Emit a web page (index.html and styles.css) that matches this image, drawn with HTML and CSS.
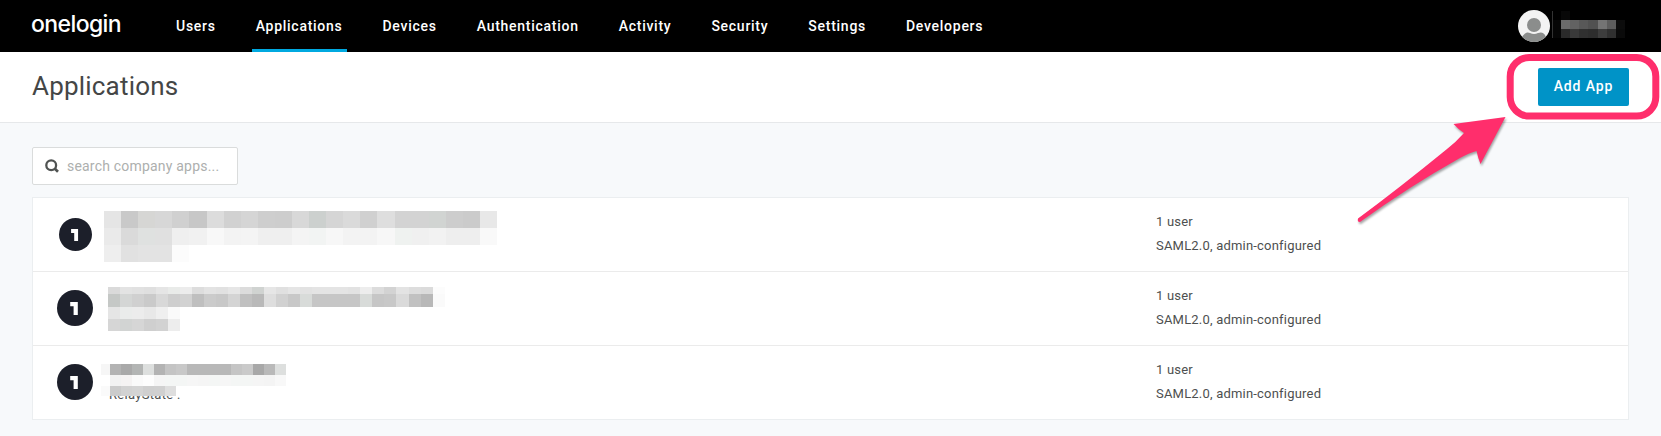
FILE: index.html
```html
<!DOCTYPE html>
<html lang="en">
<head>
<meta charset="utf-8">
<title>Applications</title>
<link rel="stylesheet" href="styles.css">
</head>
<body>
<header class="topbar">
  <div class="logo">onelogin</div>
  <nav class="nav">
    <a>Users</a><a class="active">Applications</a><a>Devices</a><a>Authentication</a><a>Activity</a><a>Security</a><a>Settings</a><a>Developers</a>
  </nav>
  <div class="account">
    <svg class="avatar" width="32" height="32" viewBox="0 0 32 32"><defs><clipPath id="face"><circle cx="16" cy="16" r="16"/></clipPath></defs><g clip-path="url(#face)"><rect width="32" height="32" fill="#f3f3f3"/><circle cx="16" cy="15" r="7" fill="#8b8d8c"/><path d="M4 27C7 22 10 22 12 23Q16 25 20 23C23 22 26 22 28 27V32H4Z" fill="#8b8d8c"/></g></svg>
    <svg class="mosaic" data-mosaic="name" width="73" height="28"></svg>
  </div>
</header>
<section class="titlebar">
  <h1>Applications</h1>
  <button class="add">Add App</button>
</section>
<main class="content">
  <div class="search">
    <svg width="14" height="14" viewBox="0 0 14 14" fill="none" stroke="#505352"><circle cx="6.2" cy="6.2" r="4.9" stroke-width="2.3"/><path d="M9.6 9.6L13 12.8" stroke-width="2.7"/></svg>
    <input type="text" placeholder="search company apps...">
  </div>
  <div class="apps">
    <div class="row">
      <div class="mark"><svg width="33" height="33" viewBox="0 0 36 36"><circle cx="18" cy="18" r="18" fill="#1c1f2a"/><path d="M13.2 14.2H18.7V25" fill="none" stroke="#fff" stroke-width="4.2"/></svg></div>
      <div class="name first"><svg class="mosaic" data-mosaic="one" width="395" height="52"></svg></div>
      <div class="meta"><span>1 user</span><span>SAML2.0, admin-configured</span></div>
    </div>
    <div class="row">
      <div class="mark"><svg width="36" height="36" viewBox="0 0 36 36"><circle cx="18" cy="18" r="18" fill="#1c1f2a"/><path d="M13.2 14.2H18.7V25" fill="none" stroke="#fff" stroke-width="4.2"/></svg></div>
      <div class="name second"><svg class="mosaic" data-mosaic="two" width="338" height="45"></svg></div>
      <div class="meta"><span>1 user</span><span>SAML2.0, admin-configured</span></div>
    </div>
    <div class="row">
      <div class="mark"><svg width="36" height="36" viewBox="0 0 36 36"><circle cx="18" cy="18" r="18" fill="#1c1f2a"/><path d="M13.2 14.2H18.7V25" fill="none" stroke="#fff" stroke-width="4.2"/></svg></div>
      <div class="name third"><span class="relay">RelayState :</span><svg class="mosaic over" data-mosaic="three" width="188" height="34"></svg></div>
      <div class="meta"><span>1 user</span><span>SAML2.0, admin-configured</span></div>
    </div>
  </div>
</main>
<svg class="callout" width="1661" height="436" viewBox="0 0 1661 436">
  <rect x="1510.2" y="57.5" width="145.6" height="58.5" rx="19" fill="none" stroke="#ff2e6c" stroke-width="7"/>
  <path d="M1505.5 117L1453.5 124Q1458 129 1464 133Q1456 142 1447 149Q1398 189 1358 218.5Q1357 222 1360 222Q1410 186 1460 158Q1469 153 1476.5 151Q1478 158 1480.5 164Z" fill="#ff2e6c"/>
</svg>
<script src="mosaic.js"></script>
</body>
</html>
```
FILE: styles.css
```css
* { box-sizing: border-box; }
body { margin: 0; height: 436px; overflow: hidden; position: relative; background: #f7f9fb; font-family: Roboto, sans-serif; color: #4d4f4f; }
.topbar { height: 52px; background: #000; color: #fff; display: flex; padding: 0 36px 0 31px; }
.logo { width: 141px; font: 500 23px/49px Inter, sans-serif; letter-spacing: -0.6px; }
.nav { display: flex; gap: 32px; }
.nav a { height: 52px; padding: 0 4px; font-size: 14px; font-weight: 500; line-height: 52px; letter-spacing: 0.73px; }
.nav .active { border-bottom: 3px solid #00a9e0; }
.account { margin-left: auto; display: flex; padding-top: 10px; gap: 2px; }
.mosaic { display: block; }
.titlebar { height: 71px; background: #fff; border-bottom: 1px solid #e6e8ea; display: flex; align-items: flex-start; justify-content: space-between; padding: 16px 32px 0; }
h1 { margin: 0; font-size: 26px; font-weight: 400; line-height: 36px; letter-spacing: 0.2px; color: #444646; }
.add { width: 91px; height: 38px; border: 0; border-radius: 2px; background: #0093c7; color: #fff; font: 500 14px Roboto, sans-serif; letter-spacing: 0.9px; padding: 0 0 2px; }
.content { padding: 24px 32px 0; }
.search { width: 206px; height: 38px; border: 1px solid #dadcdc; border-radius: 2px; background: #fff; display: flex; align-items: center; padding: 0 12px; gap: 8px; }
.search svg { flex: none; }
.search input { width: 158px; border: 0; padding: 0; outline: 0; background: none; font: 400 14px Roboto, sans-serif; letter-spacing: 0.2px; }
.search input::placeholder { color: #adafae; }
.apps { margin-top: 12px; border: 1px solid #ebeef0; background: #fff; }
.row { height: 74px; border-bottom: 1px solid #ebebeb; display: flex; }
.row:last-child { height: 73px; border-bottom: 0; }
.mark { width: 84px; display: flex; align-items: center; justify-content: center; padding-bottom: 1px; }
.first { width: 1052px; margin-left: -13px; padding-top: 13px; }
.second { width: 1048px; margin-left: -9px; padding-top: 15px; }
.third { width: 1055px; margin-left: -16px; padding-top: 18px; display: grid; align-content: start; }
.relay { grid-area: 1 / 1; padding: 21px 0 0 8px; font-size: 13px; line-height: 19px; letter-spacing: 0.3px; }
.over { grid-area: 1 / 1; position: relative; }
.meta { display: flex; flex-direction: column; padding-top: 12px; font-size: 13px; line-height: 24px; letter-spacing: 0.2px; }
.callout { position: absolute; left: 0; top: 0; pointer-events: none; }
.callout path { filter: drop-shadow(1px 2px 1px rgba(0, 0, 0, 0.35)); }
```
FILE: mosaic.js
```js
// Redacted labels: each row is [x, y, cell width, row height, colours]
const mosaics = {
  name: [
    [0, 1, 1, 27, '333'], [9, 1, 9, 9, '080808'],
    [1, 10, 8, 18, '060606'],
    [9, 10, 9.15, 9, '6b6b6b 626262 585858 515151 747474 5d5d5d 0c0c0c'],
    [9, 19, 9.15, 9, '2a2a2a 393939 303030 2d2d2d 3d3d3d 303030 0a0a0a']
  ],
  one: [
    [0, 0, 17.09, 17, 'e5e5e5 c9c9c9 d6d6d4 d7d7d7 d0d0d0 c7c7c7 dcdcdc d1d1d1 d5d5d5 cecece cdcdcd d8d8d8 ccd0ce d5d5d5 dadada d0d0d0 dedede d3d3d3 d3d3d3 d1d4d2 cdcdcd cbcbcb e8e8e8'],
    [0, 17, 17.09, 17, 'eaeaea dadada dfe1e0 e0e0e0 efefef f1f1f1 f8f8f8 f3f3f3 f4f4f4 efefef efefef f4f4f4 f2f4f3 f7f7f7 f3f3f3 f3f3f3 f7f7f7 eff2f0 f0f0f0 f2f2f2 eeeeee eeeeee f9f9f9'],
    [0, 34, 17.09, 17, 'eeeeee e1e1e1 e3e3e3 e3e3e3 fcfcfc']
  ],
  two: [
    [0, 0, 12.02, 7, 'dadada e3e3e3 e1e1e1 dfdfdf e5e5e5 e9ebe9 ececec dddddd e3e3e3 e1e1e1 e6e6e6 dcdcdc d0d3d1 e6e6e6 e0e0e0 e5e5e5 e2e2e2 e4e4e4 e4e4e4 e4e4e4 e2e2e2 ededed dcdcdc d3d3d3 e3e3e3 dddddd dbdbdb fcfcfc'],
    [0, 7, 12.02, 13, 'c5c8c6 d4d6d5 d0d0d0 cacaca d8d8d8 cecece d2d2d2 bfbfbf cbcbcb c8c8c8 d4d4d4 c0c0c0 b9b9b9 dedede d1d1d1 c8c8c8 d8dbd9 c6c6c6 c6c6c6 c6c6c6 c6c6c6 d8dbd9 c6c6c6 c8c8c8 dadada c1c1c1 b8b8b8 fafafa'],
    [0, 20, 12.02, 12, 'e5e5e5 eaeceb ececec e8e8e8 efefef fafafa'],
    [0, 32, 12.02, 12, 'd6d6d6 d2d4d3 d6d6d6 cfcfcf d2d2d2 ededed']
  ],
  three: [
    [0, 0, 9, 11, 'f6f6f6'],
    [9, 0, 11, 11, 'b3b3b3 a9a9a9 b3b5b4 dddfde b3b3b3 c4c4c4 c8c8c8 b8b8b8 b8b8b8 b8b8b8 b8b8b8 c5c5c5 cacaca a8a8a8 b9b9b9 dddfde'],
    [9, 11, 11, 11, 'f2f2f2 f5f3f3 fafafa fdfdfd f5f5f5 f4f6f5 f4f6f5 f6f6f6 f5f5f5 f4f6f5 f6f6f6 f4f6f5 f4f6f5 f5f5f5 f4f4f4 f8f8f8'],
    [0, 22, 9, 10, 'fafafa'],
    [9, 22, 11, 10, 'cbcbcb d2d2d2 d4d4d4 cfcfcf d0d0d0 dedede'],
    [75, 22, 11, 8, 'ffffff']
  ]
};
document.querySelectorAll('[data-mosaic]').forEach(svg => {
  mosaics[svg.dataset.mosaic].forEach(([x, y, w, h, colours]) => {
    colours.split(' ').forEach((colour, i) => {
      const cell = document.createElementNS('http://www.w3.org/2000/svg', 'rect');
      const left = Math.round(x + i * w);
      cell.setAttribute('x', left);
      cell.setAttribute('y', y);
      cell.setAttribute('width', Math.round(x + (i + 1) * w) - left);
      cell.setAttribute('height', h);
      cell.setAttribute('fill', '#' + colour);
      svg.appendChild(cell);
    });
  });
});
```
